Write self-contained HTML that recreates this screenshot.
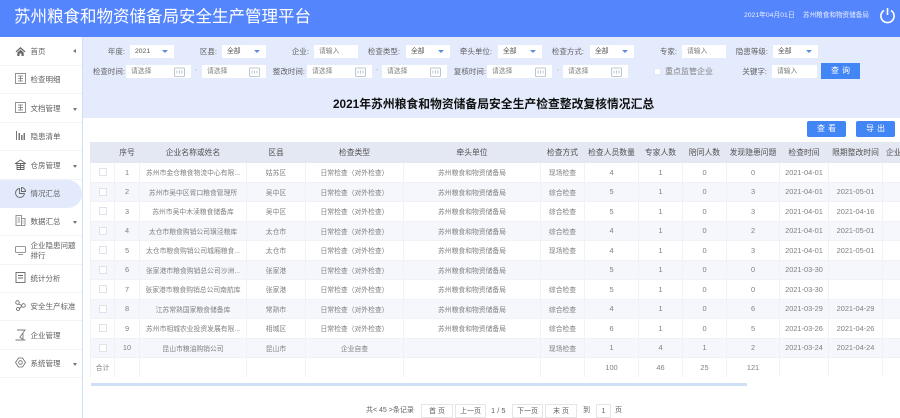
<!DOCTYPE html>
<html lang="zh-CN"><head><meta charset="utf-8"><title>苏州粮食和物资储备局安全生产管理平台</title>
<style>
*{box-sizing:border-box}
html,body{margin:0;padding:0;width:900px;height:418px;overflow:hidden;background:#fff;font-family:"Liberation Sans","Noto Sans CJK SC",sans-serif;color:#777}
.a{position:absolute;white-space:nowrap}
#top{left:0;top:0;width:900px;height:37px;background:#5585fd}
#filter{left:83px;top:37px;width:817px;height:81px;background:#e4ebfd}
#side{left:0;top:37px;width:83px;height:381px;background:#fff;border-right:1px solid #cfdff6}
.lb{font-size:7.5px;line-height:13px;color:#5f5f5f;text-align:right}
.in{height:13px;background:#fff;font-size:6.8px;line-height:13px;color:#808080;padding-left:5px}
.in i{position:absolute;right:6px;top:5px;width:0;height:0;border:3px solid transparent;border-top:3.5px solid #5f8fd8;border-bottom:0}
.in svg{position:absolute;right:6px;top:2px}
.m{left:0;width:82px;height:28.4px;border-bottom:1px solid #f1f3f8;font-size:7.5px;color:#5f5f5f;line-height:28px;padding-left:30.5px}
.m svg{position:absolute;left:15px;top:7px}
.m b{position:absolute;right:5px;top:13px;width:0;height:0;border:2.5px solid transparent;border-top:3px solid #777;border-bottom:0}
.btn{background:#4285f4;color:#fff;text-align:center;font-size:8px;letter-spacing:3px;text-indent:3px;border-radius:2px}
table{border-collapse:collapse;table-layout:fixed;width:810px;position:absolute;left:0;top:0}
#tw{left:90px;top:142px;width:810px;height:235px;overflow:hidden}
td,th{height:19.5px;padding:0;text-align:center;border:1px solid #f0f2f8;font-size:6.8px;color:#808080;font-weight:400;white-space:nowrap;overflow:hidden}
tr{height:19.5px}
th{background:#e4e8f3;font-size:7.8px;color:#505050;border-color:#e4e8f3;height:20px}
tr.e td{background:#f5f7fc}
td.n{font-size:7.4px}
.c{display:inline-block;width:8px;height:8px;border:1px solid #dfe2e8;background:#fff;vertical-align:middle}
.pg{height:14px;border:1px solid #e6e6e6;background:#fff;text-align:center;font-size:7px;line-height:13px;color:#5f5f5f}
.pt{font-size:7px;line-height:14px;color:#5f5f5f}
</style></head><body>
<div class="a" id="top"></div>
<div class="a" style="left:14px;top:5px;font-size:16.5px;line-height:24px;color:#fff">苏州粮食和物资储备局安全生产管理平台</div>
<div class="a" style="left:744px;top:11px;font-size:6.8px;line-height:9px;color:#e8eeff">2021年04月01日</div>
<div class="a" style="left:803px;top:11px;font-size:6.6px;line-height:9px;color:#e8eeff">苏州粮食和物资储备局</div>
<svg class="a" style="left:879px;top:7px" width="17" height="17" viewBox="0 0 17 17" fill="none" stroke="#fff" stroke-width="1.6"><path d="M5 3.4A6.6 6.6 0 1 0 12 3.4"/><path d="M8.5 1v7"/></svg>

<div class="a" id="side"></div>
<div class="a m" style="top:38px;height:28px;line-height:28px">首页<b style="right:6px;top:11px;border:2.5px solid transparent;border-right:3px solid #777;border-left:0"></b><svg width="11" height="11" viewBox="0 0 11 11" style="top:8px"><path d="M0.5 5.5L5.5 1l5 4.5-1 .8-4-3.5-4 3.5zM2.3 6.6l3.2-2.8 3.2 2.8V10H6.5V7.5h-2V10H2.3z" fill="#666"/></svg></div>
<div class="a m" style="top:66px">检查明细<svg width="11" height="11" viewBox="0 0 11 11" fill="none" stroke="#777" stroke-width=".8"><rect x=".5" y=".5" width="10" height="10"/><path d="M3 3h5M3 5.5h5M3 8h5M5.5 2.5v6"/></svg></div>
<div class="a m" style="top:94.5px">文档管理<b></b><svg width="11" height="11" viewBox="0 0 11 11" fill="none" stroke="#777" stroke-width=".8"><rect x=".5" y=".5" width="10" height="10"/><path d="M3 3h5M3 5.5h5M3 8h5M5.5 2.5v6"/></svg></div>
<div class="a m" style="top:123px">隐患清单<svg width="11" height="11" viewBox="0 0 11 11" fill="#777"><path d="M1 1h1v9H1zM3.5 3h1.5v7H3.5zM6 5h1.5v5H6zM8.5 3h1.5v7H8.5z"/></svg></div>
<div class="a m" style="top:151.5px">仓房管理<b></b><svg width="11" height="11" viewBox="0 0 11 11" fill="none" stroke="#666" stroke-width=".9"><path d="M.5 4.5L5.5 1l5 3.5zM2 4.5V10.5h7V4.5M2 6.5h7M2 8.5h7M5.5 4.5v6"/></svg></div>
<div class="a" style="left:0;top:180px;width:82px;height:28px;background:#e3eafc;border-radius:0 14px 14px 0"></div>
<div class="a m" style="top:180px;border:0">情况汇总<svg width="11" height="11" viewBox="0 0 11 11" fill="none" stroke="#666" stroke-width=".9"><path d="M4.5 1.5A4.5 4.5 0 1 0 9.5 6.5H4.5z"/><path d="M6.5 .5a4 4 0 0 1 4 4h-4z"/></svg></div>
<div class="a m" style="top:208px;height:28px">数据汇总<b></b><svg width="11" height="11" viewBox="0 0 11 11" fill="none" stroke="#777" stroke-width=".8"><path d="M1 10.5V.5h5.5v10zM6.5 3.5H10v7H.5M2.5 3h2.5M2.5 5h2.5M2.5 7h2.5M8 5.5v1M8 7.5v1"/></svg></div>
<div class="a m" style="top:236px;height:28.5px;line-height:9.5px;padding-top:5px">企业隐患问题<br>排行<svg width="11" height="11" viewBox="0 0 11 11" fill="none" stroke="#777" stroke-width=".8" style="top:9px"><rect x=".5" y="1.5" width="10" height="6" rx="1"/><path d="M3 9.5h5"/></svg></div>
<div class="a m" style="top:264.5px">统计分析<svg width="11" height="11" viewBox="0 0 11 11" fill="none" stroke="#666" stroke-width=".9"><rect x="1" y=".5" width="9" height="10"/><path d="M3 3.5h5M3 6h5"/></svg></div>
<div class="a m" style="top:293px">安全生产标准<svg width="11" height="11" viewBox="0 0 11 11" fill="none" stroke="#666" stroke-width=".8"><circle cx="2.5" cy="2.5" r="1.8"/><circle cx="8.5" cy="5.5" r="1.8"/><circle cx="3" cy="9" r="1.5"/><path d="M3.5 4l3.3 1.5M7 6.5L4.3 8.5"/></svg></div>
<div class="a m" style="top:321.5px">企业管理<svg width="11" height="12" viewBox="0 0 11 12" fill="none" stroke="#777" stroke-width=".9"><path d="M2 1h8L5 8M.5 11h10M8 4.5v6M4.5 8l3 2"/></svg></div>
<div class="a m" style="top:350px">系统管理<b></b><svg width="11" height="11" viewBox="0 0 11 11" fill="none" stroke="#666" stroke-width=".8"><path d="M3.5 1h4L10.500 5.500 7.500 10h-4L.5 5.500z"/><circle cx="5.500" cy="5.500" r="1.800"/></svg></div>

<div class="a" id="filter"></div>
<div class="a lb" style="left:91px;width:34px;top:45px">年度:</div><div class="a in" style="left:130px;top:45px;width:44px;color:#555">2021<i></i></div>
<div class="a lb" style="left:190px;width:27px;top:45px">区县:</div><div class="a in" style="left:222px;top:45px;width:44px;color:#555">全部<i></i></div>
<div class="a lb" style="left:282px;width:27px;top:45px">企业:</div><div class="a in" style="left:314px;top:45px;width:44px">请输入</div>
<div class="a lb" style="left:360px;width:40px;top:45px">检查类型:</div><div class="a in" style="left:406px;top:45px;width:44px;color:#555">全部<i></i></div>
<div class="a lb" style="left:452px;width:40px;top:45px">牵头单位:</div><div class="a in" style="left:498px;top:45px;width:44px;color:#555">全部<i></i></div>
<div class="a lb" style="left:544px;width:40px;top:45px">检查方式:</div><div class="a in" style="left:590px;top:45px;width:44px;color:#555">全部<i></i></div>
<div class="a lb" style="left:650px;width:27px;top:45px">专家:</div><div class="a in" style="left:682px;top:45px;width:44px">请输入</div>
<div class="a lb" style="left:728px;width:40px;top:45px">隐患等级:</div><div class="a in" style="left:773px;top:45px;width:45px;color:#555">全部<i></i></div>

<div class="a lb" style="left:85px;width:40px;top:65px">检查时间:</div>
<div class="a in" style="left:126px;top:65px;width:65px">请选择<svg width="11" height="10" viewBox="0 0 11 10" fill="none" stroke="#a9b8c4" stroke-width=".8"><rect x=".5" y="1" width="10" height="8.5" rx="1"/><path d="M3 3.500v3M5.500 3.500v3M8 3.500v3"/></svg></div>
<div class="a pt" style="left:195px;top:64px;color:#aaa">-</div>
<div class="a in" style="left:202px;top:65px;width:64px">请选择<svg width="11" height="10" viewBox="0 0 11 10" fill="none" stroke="#a9b8c4" stroke-width=".8"><rect x=".5" y="1" width="10" height="8.5" rx="1"/><path d="M3 3.500v3M5.500 3.500v3M8 3.500v3"/></svg></div>
<div class="a lb" style="left:265px;width:40px;top:65px">整改时间:</div>
<div class="a in" style="left:307px;top:65px;width:65px">请选择<svg width="11" height="10" viewBox="0 0 11 10" fill="none" stroke="#a9b8c4" stroke-width=".8"><rect x=".5" y="1" width="10" height="8.5" rx="1"/><path d="M3 3.500v3M5.500 3.500v3M8 3.500v3"/></svg></div>
<div class="a pt" style="left:376px;top:64px;color:#aaa">-</div>
<div class="a in" style="left:382px;top:65px;width:65px">请选择<svg width="11" height="10" viewBox="0 0 11 10" fill="none" stroke="#a9b8c4" stroke-width=".8"><rect x=".5" y="1" width="10" height="8.5" rx="1"/><path d="M3 3.500v3M5.500 3.500v3M8 3.500v3"/></svg></div>
<div class="a lb" style="left:446px;width:40px;top:65px">复核时间:</div>
<div class="a in" style="left:487px;top:65px;width:65px">请选择<svg width="11" height="10" viewBox="0 0 11 10" fill="none" stroke="#a9b8c4" stroke-width=".8"><rect x=".5" y="1" width="10" height="8.5" rx="1"/><path d="M3 3.500v3M5.500 3.500v3M8 3.500v3"/></svg></div>
<div class="a pt" style="left:557px;top:64px;color:#aaa">-</div>
<div class="a in" style="left:563px;top:65px;width:65px">请选择<svg width="11" height="10" viewBox="0 0 11 10" fill="none" stroke="#a9b8c4" stroke-width=".8"><rect x=".5" y="1" width="10" height="8.5" rx="1"/><path d="M3 3.500v3M5.500 3.500v3M8 3.500v3"/></svg></div>
<div class="a" style="left:654px;top:68px;width:7px;height:7px;background:#fff;border:1px solid #e3e6ee"></div>
<div class="a lb" style="left:665px;top:65px;color:#808080;text-align:left;font-size:8px">重点监管企业</div>
<div class="a lb" style="left:735px;width:32px;top:65px">关键字:</div>
<div class="a in" style="left:772px;top:65px;width:45px">请输入</div>
<div class="a btn" style="left:821px;top:63px;width:39px;height:16px;line-height:16px;border-radius:0">查询</div>

<div class="a" style="left:333px;top:96px;font-size:11.8px;line-height:16px;font-weight:700;color:#111">2021年苏州粮食和物资储备局安全生产检查整改复核情况汇总</div>

<div class="a btn" style="left:807px;top:121px;width:39px;height:16px;line-height:16px">查看</div>
<div class="a btn" style="left:856px;top:121px;width:39px;height:16px;line-height:16px">导出</div>

<div class="a" id="tw"><table>
<colgroup><col style="width:24px"><col style="width:25px"><col style="width:107px"><col style="width:59px"><col style="width:98px"><col style="width:137px"><col style="width:44px"><col style="width:54px"><col style="width:44px"><col style="width:44px"><col style="width:53px"><col style="width:49px"><col style="width:54px"><col style="width:18px"></colgroup>
<tr><th></th><th>序号</th><th>企业名称或姓名</th><th>区县</th><th>检查类型</th><th>牵头单位</th><th>检查方式</th><th>检查人员数量</th><th>专家人数</th><th>陪同人数</th><th>发现隐患问题</th><th>检查时间</th><th>限期整改时间</th><th style="text-align:left;padding-left:3px">企业</th></tr>
<tr><td><span class="c"></span></td><td class="n">1</td><td>苏州市金仓粮食物流中心有限...</td><td>姑苏区</td><td>日常检查（对外检查）</td><td>苏州粮食和物资储备局</td><td>现场检查</td><td class="n">4</td><td class="n">1</td><td class="n">0</td><td class="n">0</td><td class="n">2021-04-01</td><td class="n"></td><td></td></tr>
<tr class="e"><td><span class="c"></span></td><td class="n">2</td><td>苏州市吴中区胥口粮食管理所</td><td>吴中区</td><td>日常检查（对外检查）</td><td>苏州粮食和物资储备局</td><td>综合检查</td><td class="n">5</td><td class="n">1</td><td class="n">0</td><td class="n">3</td><td class="n">2021-04-01</td><td class="n">2021-05-01</td><td></td></tr>
<tr><td><span class="c"></span></td><td class="n">3</td><td>苏州市吴中木渎粮食储备库</td><td>吴中区</td><td>日常检查（对外检查）</td><td>苏州粮食和物资储备局</td><td>综合检查</td><td class="n">5</td><td class="n">1</td><td class="n">0</td><td class="n">3</td><td class="n">2021-04-01</td><td class="n">2021-04-16</td><td></td></tr>
<tr class="e"><td><span class="c"></span></td><td class="n">4</td><td>太仓市粮食购销公司璜泾粮库</td><td>太仓市</td><td>日常检查（对外检查）</td><td>苏州粮食和物资储备局</td><td>综合检查</td><td class="n">4</td><td class="n">1</td><td class="n">0</td><td class="n">2</td><td class="n">2021-04-01</td><td class="n">2021-05-01</td><td></td></tr>
<tr><td><span class="c"></span></td><td class="n">5</td><td>太仓市粮食购销公司城厢粮食...</td><td>太仓市</td><td>日常检查（对外检查）</td><td>苏州粮食和物资储备局</td><td>现场检查</td><td class="n">4</td><td class="n">1</td><td class="n">0</td><td class="n">3</td><td class="n">2021-04-01</td><td class="n">2021-05-01</td><td></td></tr>
<tr class="e"><td><span class="c"></span></td><td class="n">6</td><td>张家港市粮食购销总公司沙洲...</td><td>张家港</td><td>日常检查（对外检查）</td><td>苏州粮食和物资储备局</td><td></td><td class="n">5</td><td class="n">1</td><td class="n">0</td><td class="n">0</td><td class="n">2021-03-30</td><td class="n"></td><td></td></tr>
<tr><td><span class="c"></span></td><td class="n">7</td><td>张家港市粮食购销总公司南航库</td><td>张家港</td><td>日常检查（对外检查）</td><td>苏州粮食和物资储备局</td><td>综合检查</td><td class="n">5</td><td class="n">1</td><td class="n">0</td><td class="n">0</td><td class="n">2021-03-30</td><td class="n"></td><td></td></tr>
<tr class="e"><td><span class="c"></span></td><td class="n">8</td><td>江苏常熟国家粮食储备库</td><td>常熟市</td><td>日常检查（对外检查）</td><td>苏州粮食和物资储备局</td><td>综合检查</td><td class="n">4</td><td class="n">1</td><td class="n">0</td><td class="n">6</td><td class="n">2021-03-29</td><td class="n">2021-04-29</td><td></td></tr>
<tr><td><span class="c"></span></td><td class="n">9</td><td>苏州市相城农业投资发展有限...</td><td>相城区</td><td>日常检查（对外检查）</td><td>苏州粮食和物资储备局</td><td>综合检查</td><td class="n">6</td><td class="n">1</td><td class="n">0</td><td class="n">5</td><td class="n">2021-03-26</td><td class="n">2021-04-26</td><td></td></tr>
<tr class="e"><td><span class="c"></span></td><td class="n">10</td><td>昆山市粮油购销公司</td><td>昆山市</td><td>企业自查</td><td></td><td>现场检查</td><td class="n">1</td><td class="n">4</td><td class="n">1</td><td class="n">2</td><td class="n">2021-03-24</td><td class="n">2021-04-24</td><td></td></tr>
<tr><td>合计</td><td></td><td></td><td></td><td></td><td></td><td></td><td class="n">100</td><td class="n">46</td><td class="n">25</td><td class="n">121</td><td></td><td></td><td></td></tr>
</table></div>
<div class="a" style="left:91px;top:383px;width:656px;height:2.5px;background:#cfdff6"></div>

<div class="a pt" style="left:366px;top:404px">共&lt; 45 &gt;条记录</div>
<div class="a pg" style="left:421px;top:404px;width:32px">首 页</div>
<div class="a pg" style="left:455px;top:404px;width:31px">上一页</div>
<div class="a pt" style="left:491px;top:404px;font-size:7.5px">1 / 5</div>
<div class="a pg" style="left:512px;top:404px;width:31px">下一页</div>
<div class="a pg" style="left:545px;top:404px;width:32px">末 页</div>
<div class="a pt" style="left:583px;top:404px">到</div>
<div class="a pg" style="left:596px;top:404px;width:15px">1</div>
<div class="a pt" style="left:615px;top:404px">页</div>
</body></html>
